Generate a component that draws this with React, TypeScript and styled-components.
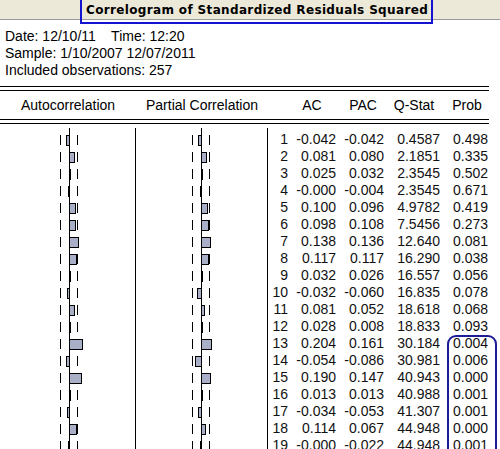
import React from "react";
import styled, { createGlobalStyle } from "styled-components";

const GlobalStyle = createGlobalStyle`
  html, body {
    margin: 0;
    padding: 0;
    background: #ffffff;
    overflow: hidden;
  }
  body {
    font-family: "Liberation Sans", Arial, sans-serif;
    color: #000;
  }
`;

const SCALE = 64;
const ROW_H = 17;
const BAR_FILL = "#a9afc7";

type Row = {
  lag: number;
  ac: string;
  pac: string;
  q: string;
  prob: string;
};

const rows: Row[] = [
  { lag: 1, ac: "-0.042", pac: "-0.042", q: "0.4587", prob: "0.498" },
  { lag: 2, ac: "0.081", pac: "0.080", q: "2.1851", prob: "0.335" },
  { lag: 3, ac: "0.025", pac: "0.032", q: "2.3545", prob: "0.502" },
  { lag: 4, ac: "-0.000", pac: "-0.004", q: "2.3545", prob: "0.671" },
  { lag: 5, ac: "0.100", pac: "0.096", q: "4.9782", prob: "0.419" },
  { lag: 6, ac: "0.098", pac: "0.108", q: "7.5456", prob: "0.273" },
  { lag: 7, ac: "0.138", pac: "0.136", q: "12.640", prob: "0.081" },
  { lag: 8, ac: "0.117", pac: "0.117", q: "16.290", prob: "0.038" },
  { lag: 9, ac: "0.032", pac: "0.026", q: "16.557", prob: "0.056" },
  { lag: 10, ac: "-0.032", pac: "-0.060", q: "16.835", prob: "0.078" },
  { lag: 11, ac: "0.081", pac: "0.052", q: "18.618", prob: "0.068" },
  { lag: 12, ac: "0.028", pac: "0.008", q: "18.833", prob: "0.093" },
  { lag: 13, ac: "0.204", pac: "0.161", q: "30.184", prob: "0.004" },
  { lag: 14, ac: "-0.054", pac: "-0.086", q: "30.981", prob: "0.006" },
  { lag: 15, ac: "0.190", pac: "0.147", q: "40.943", prob: "0.000" },
  { lag: 16, ac: "0.013", pac: "0.013", q: "40.988", prob: "0.001" },
  { lag: 17, ac: "-0.034", pac: "-0.053", q: "41.307", prob: "0.001" },
  { lag: 18, ac: "0.114", pac: "0.067", q: "44.948", prob: "0.000" },
  { lag: 19, ac: "-0.000", pac: "-0.022", q: "44.948", prob: "0.001" },
];

const Page = styled.div`
  position: relative;
  width: 500px;
  height: 449px;
  overflow: hidden;
`;

const TitleBar = styled.div`
  position: relative;
  height: 19px;
  background: #ece9d8;
  border-bottom: 1px solid #9a9a9a;
  display: flex;
  align-items: center;
  padding-left: 86px;
  font-family: "DejaVu Sans", Verdana, sans-serif;
  font-weight: bold;
  font-size: 12px;
  letter-spacing: 0.35px;
  white-space: nowrap;
`;

const TitleHighlight = styled.div`
  position: absolute;
  left: 80px;
  top: -2px;
  width: 353px;
  height: 26px;
  box-sizing: border-box;
  border: 2px solid #1414d0;
  z-index: 2;
`;

const Info = styled.div`
  padding: 8px 0 0 5px;
  font-size: 14px;
  line-height: 17px;
`;

const InfoLine = styled.div`
  white-space: pre;
`;

const Table = styled.div`
  width: 489px;
  margin-top: 7px;
`;

const DoubleRule = styled.div`
  height: 5px;
  box-sizing: border-box;
  border-top: 1px solid #000;
  border-bottom: 1px solid #000;
`;

const HeaderRow = styled.div`
  display: grid;
  grid-template-columns: 136px 132px 20px 48px 54px 48px 58px;
  height: 28px;
  align-items: center;
  font-size: 14px;
  line-height: 17px;
  white-space: nowrap;
`;

const HeaderCell = styled.div`
  text-align: center;
`;

const Body = styled.div`
  position: relative;
  padding-top: 4px;
`;

const DataRow = styled.div<{ $h: number }>`
  display: grid;
  grid-template-columns: 136px 132px 20px 48px 48px 56px 48px;
  height: ${(p) => p.$h}px;
  font-size: 14px;
  line-height: ${(p) => p.$h}px;
  white-space: nowrap;
`;

const ChartCell = styled.div`
  border-right: 1px solid #000;
  overflow: hidden;
  & > svg {
    display: block;
  }
`;

const NumCell = styled.div`
  text-align: right;
  color: #111;
`;

const ProbHighlight = styled.div`
  position: absolute;
  left: 447px;
  top: 211px;
  width: 50px;
  height: 160px;
  box-sizing: border-box;
  border: 2px solid #1c1c98;
  border-radius: 9px;
  z-index: 2;
`;

type BarProps = { value: string; width: number; center: number; height: number };

const BarChart: React.FC<BarProps> = ({ value, width, center, height }) => {
  const c = center;
  const v = parseFloat(value);
  const neg = value.trim().startsWith("-");
  const pw = Math.round(Math.abs(v * SCALE));
  let bar: React.ReactNode = null;
  if (height >= ROW_H) {
    if (pw === 0) {
      if (neg) bar = <rect x={c - 1} y={4} width={2} height={11} fill="#000" />;
    } else if (pw <= 2 && !neg) {
      bar = <rect x={c} y={4} width={2} height={11} fill="#000" />;
    } else if (neg) {
      bar = (
        <rect x={c + 0.5 - pw} y={4.5} width={pw} height={10} fill={BAR_FILL} stroke="#000" strokeWidth={1} />
      );
    } else {
      bar = (
        <rect x={c + 0.5} y={4.5} width={pw} height={10} fill={BAR_FILL} stroke="#000" strokeWidth={1} />
      );
    }
  }
  return (
    <svg width={width} height={height} shapeRendering="crispEdges">
      {height >= ROW_H && (
        <>
          <rect x={c - 9} y={4} width={1} height={10} fill="#000" />
          <rect x={c + 8} y={4} width={1} height={10} fill="#000" />
        </>
      )}
      <rect x={c} y={0} width={1} height={height} fill="#000" />
      {bar}
    </svg>
  );
};

const ChartPair: React.FC<{ ac: string; pac: string; h: number }> = ({ ac, pac, h }) => (
  <>
    <ChartCell>
      <BarChart value={ac} width={135} center={69} height={h} />
    </ChartCell>
    <ChartCell>
      <BarChart value={pac} width={131} center={65} height={h} />
    </ChartCell>
  </>
);

export default function App() {
  return (
    <Page>
      <GlobalStyle />
      <TitleBar>
        Correlogram of Standardized Residuals Squared
        <TitleHighlight />
      </TitleBar>
      <Info>
        <InfoLine>{"Date: 12/10/11    Time: 12:20"}</InfoLine>
        <InfoLine>Sample: 1/10/2007 12/07/2011</InfoLine>
        <InfoLine>Included observations: 257</InfoLine>
      </Info>
      <Table>
        <DoubleRule />
        <HeaderRow>
          <HeaderCell>Autocorrelation</HeaderCell>
          <HeaderCell>Partial Correlation</HeaderCell>
          <HeaderCell />
          <HeaderCell>AC</HeaderCell>
          <HeaderCell>PAC</HeaderCell>
          <HeaderCell>Q-Stat</HeaderCell>
          <HeaderCell>Prob</HeaderCell>
        </HeaderRow>
        <DoubleRule />
        <Body>
          <DataRow $h={3}>
            <ChartPair ac="0" pac="0" h={3} />
          </DataRow>
          {rows.map((r) => (
            <DataRow key={r.lag} $h={ROW_H}>
              <ChartPair ac={r.ac} pac={r.pac} h={ROW_H} />
              <NumCell>{r.lag}</NumCell>
              <NumCell>{r.ac}</NumCell>
              <NumCell>{r.pac}</NumCell>
              <NumCell>{r.q}</NumCell>
              <NumCell>{r.prob}</NumCell>
            </DataRow>
          ))}
          <ProbHighlight />
        </Body>
      </Table>
    </Page>
  );
}
